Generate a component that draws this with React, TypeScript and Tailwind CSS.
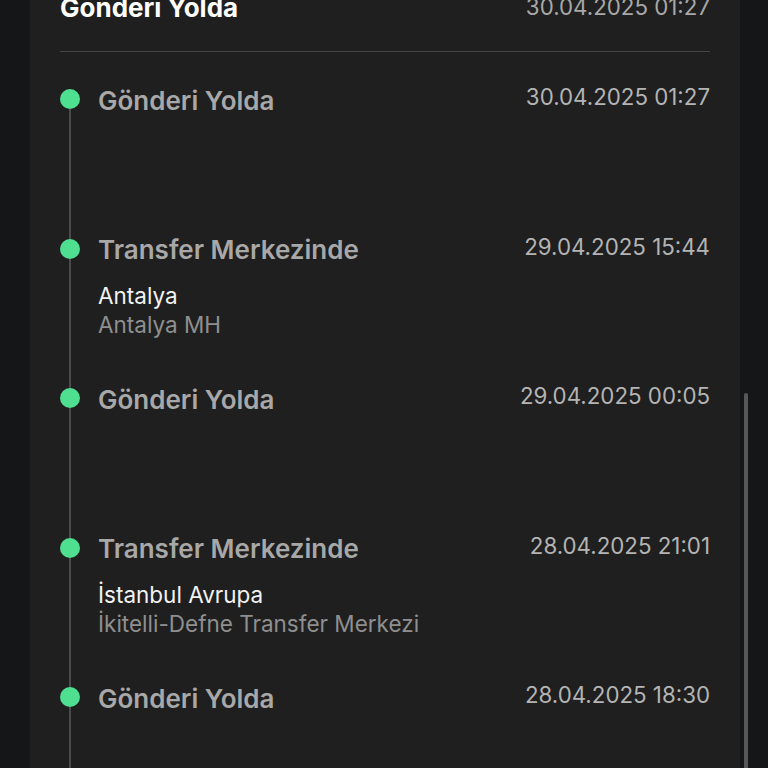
type Step = {
    title: string;
    date: string;
    city?: string;
    place?: string;
};

const steps: Step[] = [
    { title: "Gönderi Yolda", date: "30.04.2025 01:27" },
    { title: "Transfer Merkezinde", date: "29.04.2025 15:44", city: "Antalya", place: "Antalya MH" },
    { title: "Gönderi Yolda", date: "29.04.2025 00:05" },
    { title: "Transfer Merkezinde", date: "28.04.2025 21:01", city: "İstanbul Avrupa", place: "İkitelli-Defne Transfer Merkezi" },
    { title: "Gönderi Yolda", date: "28.04.2025 18:30" },
];

function TimelineItem({ step }: { step: Step }) {
    return (
        <div className="flex h-[149.5px] gap-[18px]">
            {/* dot + line */}
            <div className="flex w-5 shrink-0 flex-col items-center">
                <div className="h-5 w-5 rounded-full bg-[#4fdf91]" />
                <div className="w-[2px] flex-1 bg-[#4a4a4a]" />
            </div>

            <div className="min-w-0 flex-1">
                <div className="flex h-5 items-center justify-between">
                    <span className="mt-[2px] text-[26px] font-semibold text-[#a8a8a8]">{step.title}</span>
                    <span className="-mt-1 text-[22.3px] text-[#b4b4b4]">{step.date}</span>
                </div>
                {step.city && (
                    <div className="mt-[22px] text-[22.5px] leading-[29px]">
                        <div className="text-[#f2f2f2]">{step.city}</div>
                        <div className="text-[#8f8f8f]">{step.place}</div>
                    </div>
                )}
            </div>
        </div>
    );
}

export default function App() {
    return (
        <div className="flex h-[768px] w-[768px] overflow-hidden bg-[#151618]" style={{ fontFamily: "Inter, 'Noto Sans', sans-serif" }}>
            <div className="relative ml-[30px] w-[710px] overflow-hidden bg-[#1f1f1f] px-[30px]">
                {/* header (scrolled up) */}
                <div className="-mt-[10px] flex h-[34px] items-center justify-between">
                    <span className="text-[26px] font-bold text-white">Gönderi Yolda</span>
                    <span className="text-[22.3px] text-[#a8a8a8]">30.04.2025 01:27</span>
                </div>
                <div className="mt-[27px] h-px bg-[#454545]" />

                <div className="mt-[37px]">
                    {steps.map((s, i) => (
                        <TimelineItem key={i} step={s} />
                    ))}
                </div>
            </div>

            {/* scrollbar */}
            <div className="relative w-[28px]">
                <div className="absolute left-[4px] top-[393px] h-[380px] w-[4px] rounded-full bg-[#575757]" />
            </div>
        </div>
    );
}
